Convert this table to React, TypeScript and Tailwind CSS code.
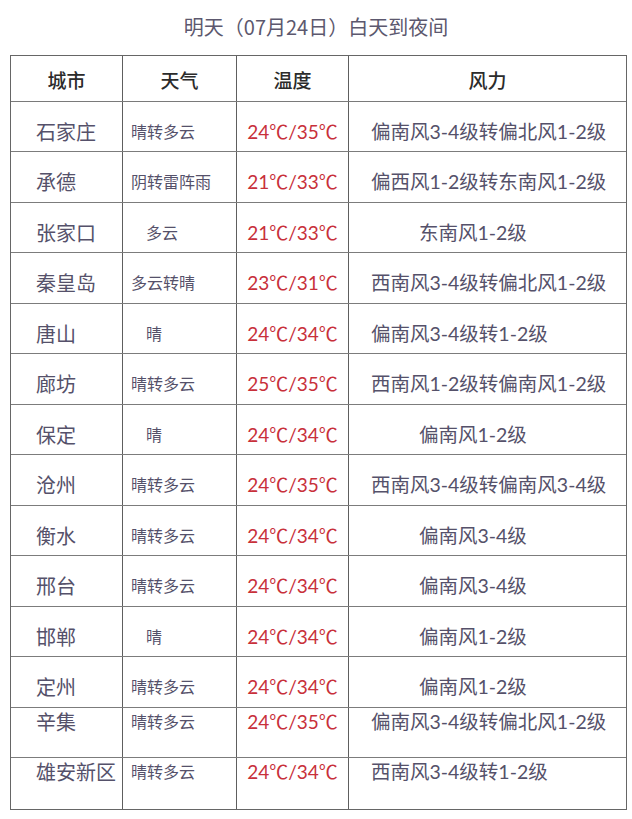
import React from "react";

type Row = {
  city: string;
  weather: string;
  wIndent?: boolean;
  temp: string;
  wind: string;
  windIndent?: boolean;
};

const rows: Row[] = [
  { city: "石家庄", weather: "晴转多云", temp: "24℃/35℃", wind: "偏南风3-4级转偏北风1-2级" },
  { city: "承德", weather: "阴转雷阵雨", temp: "21℃/33℃", wind: "偏西风1-2级转东南风1-2级" },
  { city: "张家口", weather: "多云", wIndent: true, temp: "21℃/33℃", wind: "东南风1-2级", windIndent: true },
  { city: "秦皇岛", weather: "多云转晴", temp: "23℃/31℃", wind: "西南风3-4级转偏北风1-2级" },
  { city: "唐山", weather: "晴", wIndent: true, temp: "24℃/34℃", wind: "偏南风3-4级转1-2级" },
  { city: "廊坊", weather: "晴转多云", temp: "25℃/35℃", wind: "西南风1-2级转偏南风1-2级" },
  { city: "保定", weather: "晴", wIndent: true, temp: "24℃/34℃", wind: "偏南风1-2级", windIndent: true },
  { city: "沧州", weather: "晴转多云", temp: "24℃/35℃", wind: "西南风3-4级转偏南风3-4级" },
  { city: "衡水", weather: "晴转多云", temp: "24℃/34℃", wind: "偏南风3-4级", windIndent: true },
  { city: "邢台", weather: "晴转多云", temp: "24℃/34℃", wind: "偏南风3-4级", windIndent: true },
  { city: "邯郸", weather: "晴", wIndent: true, temp: "24℃/34℃", wind: "偏南风1-2级", windIndent: true },
  { city: "定州", weather: "晴转多云", temp: "24℃/34℃", wind: "偏南风1-2级", windIndent: true },
  { city: "辛集", weather: "晴转多云", temp: "24℃/35℃", wind: "偏南风3-4级转偏北风1-2级" },
  { city: "雄安新区", weather: "晴转多云", temp: "24℃/34℃", wind: "西南风3-4级转1-2级" },
];

const font = { fontFamily: "Lato, 'Noto Sans CJK SC', sans-serif" } as React.CSSProperties;

export default function App() {
  return (
    <div className="w-[632px] h-[819px] bg-white overflow-hidden" style={font}>
      <div className="h-[55px] flex items-center justify-center pb-[2px]">
        <div className="text-[20px] leading-none text-[#5c586e]" style={{ fontFamily: "'Noto Sans CJK SC', sans-serif" }}>
          明天（07月24日）白天到夜间
        </div>
      </div>
      <div className="ml-[10px] w-[617px] border border-[#666666]">
        <div className="flex h-[46px] border-b border-[#7a7a7a] text-[19px] font-medium text-[#2b2b2b]" style={{ fontFamily: "'Noto Sans CJK SC', sans-serif" }}>
          <div className="w-[112px] flex items-center justify-center pt-[4px] border-r border-[#5e5e5e]">城市</div>
          <div className="w-[114px] flex items-center justify-center pt-[4px] border-r border-[#5e5e5e]">天气</div>
          <div className="w-[112px] flex items-center justify-center pt-[4px] border-r border-[#5e5e5e]">温度</div>
          <div className="flex-1 flex items-center justify-center pt-[4px]">风力</div>
        </div>
        {rows.map((r, i) => {
          const last = i === rows.length - 1;
          const top = i >= rows.length - 2;
          const align = top ? "items-start pt-[4px]" : "items-center pt-[10px]";
          const h = i % 2 === 0 ? "h-[50px]" : "h-[51px]";
          return (
            <div key={r.city} className={`flex ${h} ${last ? "" : "border-b border-[#7c7c7c]"}`}>
              <div className={`w-[112px] flex ${align} pl-[25px] border-r border-[#5e5e5e] text-[20px] leading-[20px] text-[#55516a]`}>
                {r.city}
              </div>
              <div className={`w-[114px] flex ${align} ${r.wIndent ? "pl-[23px]" : "pl-[8px]"} border-r border-[#5e5e5e] text-[16px] leading-[20px] text-[#55516a]`}>
                {r.weather}
              </div>
              <div className={`w-[112px] flex ${align} justify-center border-r border-[#5e5e5e] text-[19px] leading-[20px] text-[#c8303a]`}>
                {r.temp}
              </div>
              <div className={`flex-1 flex ${align} ${r.windIndent ? "pl-[70px]" : "pl-[22px]"} text-[19.5px] leading-[20px] text-[#55516a] whitespace-nowrap`}>
                {r.wind}
              </div>
            </div>
          );
        })}
      </div>
    </div>
  );
}
